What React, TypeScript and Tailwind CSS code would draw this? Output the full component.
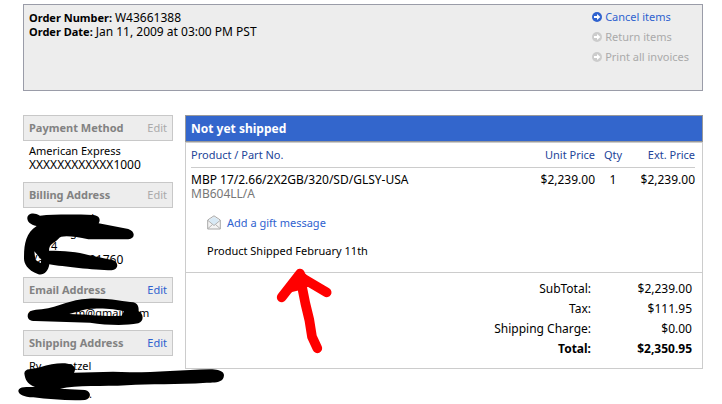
import React from 'react';

interface SidebarSectionProps {
  title: string;
  editable?: boolean;
  children: React.ReactNode;
}

const SidebarSection: React.FC<SidebarSectionProps> = ({ title, editable, children }) => {
  return (
    <section>
      <div className="flex items-center justify-between border border-[#c8c8c8] bg-[#ededed] px-[5px] leading-6">
        <h2 className="font-bold text-[#828282]">{title}</h2>
        <button
          type="button"
          disabled={!editable}
          aria-label={`Edit ${title}`}
          className={editable ? 'text-[#2f62cf]' : 'text-[#aaaaaa]'}
        >
          Edit
        </button>
      </div>
      <div className="px-1.5 pt-[3px] pb-2.5 whitespace-nowrap">{children}</div>
    </section>
  );
};

const ArrowIcon: React.FC = () => (
  <svg width="10" height="10" viewBox="0 0 10 10" aria-hidden="true">
    <circle cx="5" cy="5" r="5" fill="currentColor" />
    <path d="M2 4h3V2l3.4 3L5 8V6H2z" fill="#fff" />
  </svg>
);

const EnvelopeIcon: React.FC = () => (
  <svg width="14" height="15" viewBox="0 0 14 15" aria-hidden="true">
    <path d="M.7 5 7 .8 13.3 5v9H.7z" fill="#f4f4f4" stroke="#a8a8a8" />
    <path d="M2.5 4.5 7 2l4.5 2.5v2L7 10.5l-4.5-4z" fill="#d8e9f5" />
    <path d="m1 5.5 6 5 6-5M1 13.5l4.5-4M13 13.5l-4.5-4" fill="none" stroke="#b2b2b2" />
  </svg>
);

const orderActions = [
  { label: 'Cancel items', enabled: true },
  { label: 'Return items', enabled: false },
  { label: 'Print all invoices', enabled: false },
];

const totals = [
  { label: 'SubTotal:', value: '$2,239.00' },
  { label: 'Tax:', value: '$111.95' },
  { label: 'Shipping Charge:', value: '$0.00' },
  { label: 'Total:', value: '$2,350.95', bold: true },
];

// Hand-drawn marks over the private details and the arrow at the shipping note
const Markup: React.FC = () => (
  <svg className="pointer-events-none absolute top-0 left-0" width="400" height="404" viewBox="0 0 1200 1212" aria-hidden="true">
    <g fillRule="evenodd">
      <path
        transform="translate(30 525)"
        d="M52 131C51 116 70 110 90 122C130 118 190 118 250 120C270 122 272 135 266 145L355 162C378 170 375 192 355 193L235 193C190 182 150 180 147 190C130 208 118 205 117 227C160 227 205 230 235 240L310 256C330 265 322 286 305 286C250 285 160 275 118 268C115 290 100 302 85 298C50 285 42 265 42 250C42 210 46 175 80 153C60 148 53 140 52 131ZM73 229L76 254L92 265L94 254Z"
      />
      <path
        transform="translate(30 810)"
        d="M53 138C53 122 70 120 95 118C150 110 180 88 235 86C300 84 345 96 370 97C388 102 386 118 386 124C402 132 402 155 385 160C340 168 290 165 240 158L75 153C60 153 53 147 53 138ZM178 132L212 122C240 112 310 114 342 124L335 137C290 140 240 134 178 132Z"
      />
      <path
        transform="translate(30 810)"
        d="M43 310C45 294 65 299 90 292C130 278 170 276 185 285C197 290 197 300 192 308C250 308 300 302 360 307C420 308 520 300 600 298C640 298 645 312 641 322C635 340 610 338 590 338C500 345 420 340 350 346C280 350 200 345 150 356L225 360C245 365 245 385 225 390C180 393 120 388 70 382C40 381 25 372 25 362C28 348 50 352 75 350C50 344 45 325 43 310Z"
      />
    </g>
    <g transform="translate(780 720)" fill="#f00" stroke="#f00" strokeLinecap="round" strokeLinejoin="round">
      <path d="M120 101 65 172M124 112 200 157M120 110 136 190 148 240 156 290 172 325" fill="none" strokeWidth="29" />
      <path d="M112 100 65 165 95 152 120 146 145 136 160 136 130 100Z" strokeWidth="8" />
    </g>
  </svg>
);

const App: React.FC = () => {
  return (
    <div className="relative h-screen overflow-hidden bg-white pt-1 pr-[19px] pl-[23px] font-['Noto_Sans','Lucida_Grande',sans-serif] text-[11px] leading-[14px] text-black">
      <header className="flex min-h-[87px] items-start justify-between border border-[#9a9ca8] bg-[#ededed] pt-1.5 pr-[13px] pl-[5px]">
        <div>
          <p><b>Order Number:</b> <span className="text-[12px]">W43661388</span></p>
          <p><b>Order Date:</b> <span className="text-[12px]">Jan 11, 2009 at 03:00 PM PST</span></p>
        </div>
        <ul className="-mt-1 leading-5">
          {orderActions.map((action) => (
            <li key={action.label}>
              {action.enabled ? (
                <a href="#cancel" className="flex items-center gap-[3px] text-[#2f62cf]">
                  <ArrowIcon />
                  {action.label}
                </a>
              ) : (
                <button type="button" disabled className="flex items-center gap-[3px] text-[#aaaaaa]">
                  <span className="text-[#cccccc]"><ArrowIcon /></span>
                  {action.label}
                </button>
              )}
            </li>
          ))}
        </ul>
      </header>

      <div className="mt-6 flex items-start gap-3">
        <aside className="w-[150px] shrink-0">
          <SidebarSection title="Payment Method">
            <p>American Express</p>
            <p className="text-[12px]">XXXXXXXXXXXX1000</p>
          </SidebarSection>
          <SidebarSection title="Billing Address">
            <p className="pl-14">el</p>
            <p className="pl-7">nag</p>
            <p className="pl-[22px]">4</p>
            <p className="flex text-[12px]"><span className="w-[60px] pl-1">/a</span>91760</p>
          </SidebarSection>
          <SidebarSection title="Email Address" editable>
            <p className="flex"><span className="w-[46px]">r</span>m@gmail.com</p>
          </SidebarSection>
          <SidebarSection title="Shipping Address" editable>
            <p className="flex"><span className="w-[38px]">Ry</span>etzel</p>
            <p>&nbsp;</p>
            <p className="pl-[60px]">.</p>
            <p className="flex pl-5 text-[#777777]"><span className="w-9">ll</span><span className="w-9">d</span>ll</p>
          </SidebarSection>
        </aside>

        <main className="min-w-0 flex-1">
          <h1 className="border border-[#999999] bg-[#3366cc] px-[5px] text-[12px] leading-[25px] font-bold text-white">
            Not yet shipped
          </h1>
          <div className="border border-[#cccccc]">
            <div className="min-h-[129px] pr-[7px] pl-[5px]">
              <table className="w-full">
                <thead>
                  <tr className="border-b border-[#cccccc] leading-6 text-[#234599]">
                    <th className="text-left font-normal">Product / Part No.</th>
                    <th className="text-right font-normal">Unit Price</th>
                    <th className="w-9 text-center font-normal">Qty</th>
                    <th className="w-16 text-right font-normal">Ext. Price</th>
                  </tr>
                </thead>
                <tbody className="text-[12px]">
                  <tr className="align-top">
                    <td className="pt-[5px]">
                      <p>MBP 17/2.66/2X2GB/320/SD/GLSY-USA</p>
                      <p className="leading-[13px] text-[#777777]">MB604LL/A</p>
                    </td>
                    <td className="pt-[5px] text-right">$2,239.00</td>
                    <td className="pt-[5px] text-center">1</td>
                    <td className="pt-[5px] text-right">$2,239.00</td>
                  </tr>
                </tbody>
              </table>
              <div className="pt-[15px] pl-4">
                <a href="#gift" className="flex items-center gap-1.5 text-[#2f62cf]">
                  <EnvelopeIcon />
                  Add a gift message
                </a>
                <p className="mt-3.5">Product Shipped February 11th</p>
              </div>
            </div>
            <div className="flex justify-end border-t border-[#cccccc] pt-1.5 pr-2.5 pb-[9px]">
              <table className="text-right text-[12px] leading-5">
                <tbody>
                  {totals.map((row) => (
                    <tr key={row.label} className={row.bold ? 'font-bold' : 'font-normal'}>
                      <th className={row.bold ? 'font-bold' : 'font-normal'} scope="row">{row.label}</th>
                      <td className="w-[101px]">{row.value}</td>
                    </tr>
                  ))}
                </tbody>
              </table>
            </div>
          </div>
        </main>
      </div>
      <Markup />
    </div>
  );
};

export default App;
